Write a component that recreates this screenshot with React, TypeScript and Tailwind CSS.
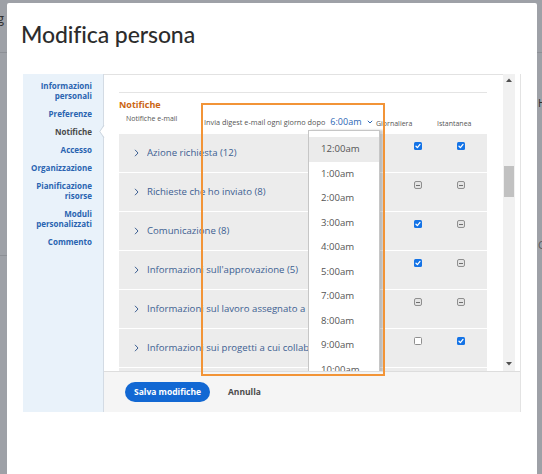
import React from "react";

type S = "c" | "m" | "u";

function Box({ s }: { s: S }) {
  if (s === "c")
    return (
      <div className="w-[8px] h-[8px] rounded-[1.5px] bg-[#1473e6] flex items-center justify-center">
        <svg width="6" height="6" viewBox="0 0 6 6">
          <path d="M1 3.2 L2.4 4.6 L5 1.4" stroke="white" strokeWidth="1.3" fill="none" strokeLinecap="round" strokeLinejoin="round" />
        </svg>
      </div>
    );
  if (s === "m")
    return (
      <div className="w-[8px] h-[8px] rounded-[2px] border border-[#8f8f8f] bg-[#e4e4e4] flex items-center justify-center">
        <div className="w-[4px] h-[1px] bg-[#6f6f6f]" />
      </div>
    );
  return <div className="w-[8px] h-[8px] rounded-[1.5px] border border-[#8f8f8f] bg-white" />;
}

const rows: { t: string; d: S; i: S }[] = [
  { t: "Azione richiesta (12)", d: "c", i: "c" },
  { t: "Richieste che ho inviato (8)", d: "m", i: "m" },
  { t: "Comunicazione (8)", d: "c", i: "m" },
  { t: "Informazioni sull'approvazione (5)", d: "c", i: "m" },
  { t: "Informazioni sul lavoro assegnato a me (9)", d: "m", i: "m" },
  { t: "Informazioni sui progetti a cui collaboro (6)", d: "u", i: "c" },
];

const times = ["12:00am", "1:00am", "2:00am", "3:00am", "4:00am", "5:00am", "7:00am", "8:00am", "9:00am", "10:00am"];

const sidebar: { lines: string[]; active?: boolean }[] = [
  { lines: ["Informazioni", "personali"] },
  { lines: ["Preferenze"] },
  { lines: ["Notifiche"], active: true },
  { lines: ["Accesso"] },
  { lines: ["Organizzazione"] },
  { lines: ["Pianificazione", "risorse"] },
  { lines: ["Moduli", "personalizzati"] },
  { lines: ["Commento"] },
];

export default function App() {
  return (
    <div className="relative w-[542px] h-[474px] overflow-hidden bg-[#9ea1a7] font-['Open_Sans',sans-serif] flex pl-[7px] pr-[5px] pt-[3px]">
      {/* background page fragments */}
      <div className="absolute left-0 top-[52px] w-[7px] h-[1px] bg-[#8d9096]" />
      <div className="absolute left-0 top-[255px] w-[7px] h-[1px] bg-[#8d9096]" />
      <span className="absolute left-[-3px] top-[10px] text-[13px] leading-[16px] text-[#2e2e2e]">g</span>
      <div className="absolute right-0 top-[52px] w-[5px] h-[1px] bg-[#8d9096]" />
      <span className="absolute left-[538px] top-[96px] text-[11px] leading-[14px] text-[#2e2e2e]">H</span>
      <span className="absolute left-[538px] top-[238px] text-[11px] leading-[14px] text-[#5a5a5a]">C</span>

      <div className="flex-1 bg-white flex flex-col rounded-t-[2px]">
        <div className="h-[71px] pl-[14px] pt-[15px] text-[23px] leading-[32px] font-medium tracking-[-0.1px] text-[#2c2c2c] font-['Lato',sans-serif]">
          Modifica persona
        </div>

        {/* embedded screenshot */}
        <div className="relative ml-[16px] w-[498px] h-[338px] flex">
          {/* sidebar */}
          <div className="relative w-[81px] bg-[#e9f2fa] border-r border-[#d3dbe4] pt-[7px] pr-[11px] flex flex-col gap-[8px] text-right">
            {sidebar.map((it, idx) => (
              <div
                key={idx}
                className={
                  "text-[8px] leading-[10px] font-bold " + (it.active ? "text-[#4a4a4a]" : "text-[#2a64b1]")
                }
              >
                {it.lines.map((l) => (
                  <div key={l}>{l}</div>
                ))}
              </div>
            ))}
            <svg className="absolute z-10 left-[76px] top-[51px]" width="6" height="13" viewBox="0 0 6 13">
              <polygon points="6,0 1,6.5 6,13" fill="white" />
              <polyline points="5,0 0.8,6.5 5,13" fill="none" stroke="#cfd7e0" strokeWidth="1" />
            </svg>
          </div>

          {/* main */}
          <div className="w-[417px] flex flex-col border-r border-[#e3e3e3]">
            <div className="h-[297px] flex bg-white">
              <div className="relative w-[399px] border-t border-[#e2e2e2] overflow-hidden pt-[17px] pl-[15px]">
                <div className="w-[368px] border-t border-[#e4e4e4]">
                  <div className="h-[41px] pt-[6px]">
                    <div className="text-[9px] leading-[12px] font-bold text-[#cb6514]">Notifiche</div>
                    <div className="flex mt-[3px] text-[7px] leading-[10px] text-[#555555] whitespace-nowrap">
                      <div className="w-[85px] pl-[7px]">Notifiche e-mail</div>
                      <div className="w-[172px] flex items-center">
                        <span className="text-[7.3px]">Invia digest e-mail ogni giorno dopo</span>
                        <span className="ml-[5px] text-[9px] text-[#2b66b4]">6:00am</span>
                        <svg className="ml-[6px]" width="6" height="4" viewBox="0 0 6 4">
                          <polyline points="0.8,0.8 3,3 5.2,0.8" fill="none" stroke="#2b66b4" strokeWidth="1" />
                        </svg>
                      </div>
                      <div className="w-[61px] mt-[5px]">Giornaliera</div>
                      <div className="mt-[5px]">Istantanea</div>
                    </div>
                  </div>
                  {rows.map((r, idx) => (
                    <div key={idx} className="h-[39px] border-b border-white bg-[#ececec] flex">
                      <div className="w-[189px] pl-[15px] flex items-center whitespace-nowrap overflow-hidden text-[9.6px] text-[#3d5f92]">
                        <svg width="5" height="8" viewBox="0 0 5 8" className="mr-[8px] shrink-0">
                          <polyline points="1,0.8 4,4 1,7.2" fill="none" stroke="#3d5f92" strokeWidth="1" />
                        </svg>
                        <span className="block flex-1 min-w-0 overflow-hidden">{r.t}</span>
                      </div>
                      <div className="w-[17px] ml-[101px] pt-[8px] flex justify-center">
                        <Box s={r.d} />
                      </div>
                      <div className="w-[17px] ml-[26px] pt-[8px] flex justify-center">
                        <Box s={r.i} />
                      </div>
                    </div>
                  ))}
                  <div className="h-[20px] bg-[#ececec]" />
                </div>

                {/* dropdown */}
                <div className="absolute left-[204px] top-[55px] w-[72px] h-[300px] bg-white border border-[#c6c6c6] shadow-[3px_0_2px_rgba(0,0,0,0.2)] pt-[6px] z-10">
                  {times.map((t, idx) => (
                    <div
                      key={t}
                      className={
                        "h-[24.5px] pl-[12px] flex items-center text-[9.6px] text-[#555555] " +
                        (idx === 0 ? "bg-[#ebebeb]" : "")
                      }
                    >
                      {t}
                    </div>
                  ))}
                </div>
              </div>

              {/* scrollbar */}
              <div className="w-[12px] bg-[#f1f1f1] flex flex-col items-center">
                <div className="h-[12px] flex items-center justify-center">
                  <svg width="6" height="4" viewBox="0 0 6 4">
                    <polygon points="0,4 3,0.5 6,4" fill="#505050" />
                  </svg>
                </div>
                <div className="mt-[80px] w-[10px] h-[31px] bg-[#c1c1c1]" />
                <div className="flex-1" />
                <div className="h-[14px] flex items-center justify-center">
                  <svg width="6" height="4" viewBox="0 0 6 4">
                    <polygon points="0,0 6,0 3,3.5" fill="#505050" />
                  </svg>
                </div>
              </div>
              <div className="w-[5px] bg-white" />
            </div>

            {/* footer */}
            <div className="h-[41px] bg-[#f5f5f5] border-t border-[#dddddd] pl-[21px] pt-[10px] flex items-start">
              <div className="w-[85px] h-[20px] rounded-full bg-[#1268d3] text-white text-[8.5px] font-bold flex items-center justify-center">
                Salva modifiche
              </div>
              <div className="ml-[18px] h-[20px] flex items-center text-[8.5px] font-bold text-[#4b4b4b]">Annulla</div>
            </div>
          </div>

          {/* orange highlight */}
          <div className="absolute z-20 left-[178px] top-[29px] w-[184px] h-[273px] border-[2.5px] border-[#f29437]" />
        </div>
      </div>
    </div>
  );
}
